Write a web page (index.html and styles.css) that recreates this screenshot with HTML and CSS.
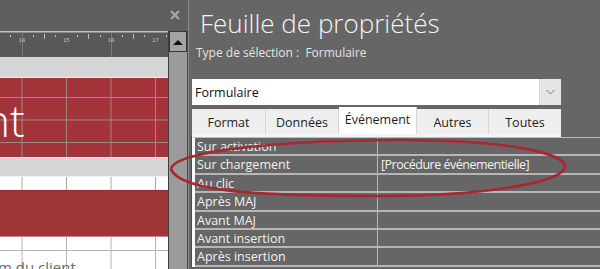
FILE: index.html
```html
<!DOCTYPE html>
<html lang="fr">
<head>
    <meta charset="UTF-8">
    <title>Feuille de propriétés</title>
    <link rel="stylesheet" href="styles.css">
</head>
<body>
    <div class="screen">
        <div class="designer">
            <div class="designer-bar">
                <svg class="close" width="12" height="12" viewBox="0 0 12 12">
                    <path d="M2 2 L10 10 M10 2 L2 10" stroke="#a9a9a9" stroke-width="2.2" fill="none"/>
                </svg>
            </div>
            <div class="designer-body">
                <div class="canvas">
                    <svg class="ruler" width="168" height="26" viewBox="0 0 168 26">
                        <rect x="0" y="0" width="168" height="1.5" fill="#c4c4c4"/>
                        <line x1="22.5" y1="2" x2="22.5" y2="26" stroke="#7a7a7a"/>
                        <line x1="111.5" y1="2" x2="111.5" y2="26" stroke="#7a7a7a"/>
                        <g stroke="#bdbdbd" stroke-width="1">
                            <line x1="10.5" y1="4" x2="10.5" y2="6"/>
                            <line x1="33.5" y1="4" x2="33.5" y2="6"/>
                            <line x1="44.5" y1="3" x2="44.5" y2="8"/>
                            <line x1="55.5" y1="4" x2="55.5" y2="6"/>
                            <line x1="77.5" y1="4" x2="77.5" y2="6"/>
                            <line x1="88.5" y1="3" x2="88.5" y2="8"/>
                            <line x1="100.5" y1="4" x2="100.5" y2="6"/>
                            <line x1="122.5" y1="4" x2="122.5" y2="6"/>
                            <line x1="133.5" y1="3" x2="133.5" y2="8"/>
                            <line x1="144.5" y1="4" x2="144.5" y2="6"/>
                            <line x1="166.5" y1="4" x2="166.5" y2="6"/>
                        </g>
                        <g class="ruler-num">
                            <text x="22" y="10.5">14</text>
                            <text x="66.5" y="10.5">15</text>
                            <text x="111" y="10.5">16</text>
                            <text x="155.5" y="10.5">17</text>
                        </g>
                    </svg>
                    <div class="band"></div>
                    <div class="section form-header">
                        <span class="form-title">nt</span>
                    </div>
                    <div class="band band-detail"></div>
                    <div class="section detail-top"></div>
                    <div class="field-box"></div>
                    <div class="section detail">
                        <span class="field-label">m du client</span>
                    </div>
                </div>
                <div class="vscroll">
                    <div class="vscroll-up">
                        <svg width="10" height="6" viewBox="0 0 10 6"><path d="M0 6 L5 1 L10 6 Z" fill="#111"/></svg>
                    </div>
                </div>
            </div>
        </div>

        <div class="sheet">
            <h1 class="sheet-title">Feuille de propriétés</h1>
            <div class="sheet-type">Type de sélection :&nbsp; Formulaire</div>
            <div class="combo">
                <span class="combo-value">Formulaire</span>
                <span class="combo-btn">
                    <svg width="9" height="6" viewBox="0 0 9 6"><path d="M0.5 1 L4.5 5 L8.5 1" stroke="#7a7a7a" stroke-width="1" fill="none"/></svg>
                </span>
            </div>
            <div class="tabs">
                <div class="tab tab-format">Format</div>
                <div class="tab tab-data">Données</div>
                <div class="tab tab-event active">Événement</div>
                <div class="tab tab-other">Autres</div>
                <div class="tab tab-all">Toutes</div>
            </div>
            <div class="tab-rule"></div>
            <div class="props">
                <div class="prop-row"><span class="prop-name">Sur activation</span><span class="prop-value"></span></div>
                <div class="prop-row"><span class="prop-name">Sur chargement</span><span class="prop-value">[Procédure événementielle]</span></div>
                <div class="prop-row"><span class="prop-name">Au clic</span><span class="prop-value"></span></div>
                <div class="prop-row"><span class="prop-name">Après MAJ</span><span class="prop-value"></span></div>
                <div class="prop-row"><span class="prop-name">Avant MAJ</span><span class="prop-value"></span></div>
                <div class="prop-row"><span class="prop-name">Avant insertion</span><span class="prop-value"></span></div>
                <div class="prop-row"><span class="prop-name">Après insertion</span><span class="prop-value"></span></div>
            </div>
        </div>

        <svg class="highlight" width="600" height="269" viewBox="0 0 600 269">
            <path d="M171 169 C175 150 290 140 400 140 C500 140 566 152 565 167 C563 183 480 196 380 196 C280 196 180 194 171 169 Z"
                  fill="none" stroke="#a9272f" stroke-width="2.6"/>
        </svg>
    </div>
</body>
</html>
```

FILE: styles.css
```css
body {
    margin: 0;
    padding: 0;
    font-family: 'Open Sans', 'Noto Sans', sans-serif;
    background: #666;
}
.screen {
    position: relative;
    width: 600px;
    height: 269px;
    overflow: hidden;
    display: flex;
}

/* form designer, left */
.designer {
    width: 188px;
    display: flex;
    flex-direction: column;
    background: #5e5e5e;
}
.designer-bar {
    height: 31px;
    display: flex;
    justify-content: flex-end;
    align-items: center;
    padding-right: 7px;
    padding-bottom: 2px;
    box-sizing: border-box;
}
.designer-body {
    flex: 1;
    display: flex;
    min-height: 0;
}
.canvas {
    width: 168px;
    overflow: hidden;
    display: flex;
    flex-direction: column;
}
.ruler {
    display: block;
    background: #585858;
    flex: none;
}
.ruler-num {
    font-family: 'DejaVu Sans', sans-serif;
    font-size: 5px;
    fill: #d0d0d0;
    text-anchor: middle;
}
.band {
    height: 20px;
    flex: none;
    background: #d6d6d6;
    border-bottom: 1px solid #efefef;
}
.band-detail {
    border-top: 1px solid #e9e9e9;
    height: 18px;
}
.section {
    flex: none;
    position: relative;
    background-image: linear-gradient(to right, #a8a8a8 1px, transparent 1px);
    background-size: 44.5px 100%;
    background-position: 21.5px 0;
}
.form-header {
    height: 79px;
    background-color: #a2343a;
    background-image:
        linear-gradient(to right, #958a8a 1px, transparent 1px),
        linear-gradient(to bottom, #958a8a 1px, transparent 1px);
    background-size: 44.5px 100%, 100% 22.5px;
    background-position: 21.5px 0, 0 19px;
    overflow: hidden;
}
.form-title {
    display: block;
    margin: 17px 0 0 -16px;
    font-family: 'Open Sans', sans-serif;
    font-weight: 300;
    font-size: 44px;
    line-height: 50px;
    color: #fff;
    white-space: nowrap;
}
.detail-top {
    height: 13px;
    background-color: #fff;
}
.field-box {
    flex: none;
    height: 47px;
    background: #a0353a;
    border-top: 1px solid #8d2a30;
    box-shadow: inset 0 -9px 0 -8px #b88a8c;
    box-sizing: border-box;
}
.detail {
    flex: 1;
    background-color: #fff;
    background-image:
        linear-gradient(to right, #b5b5b5 1px, transparent 1px),
        linear-gradient(to bottom, #b5b5b5 1px, transparent 1px);
    background-size: 44.5px 100%, 100% 44.5px;
    background-position: 21.5px 0, 0 13px;
    overflow: hidden;
}
.field-label {
    display: block;
    margin: 20px 0 0 -2px;
    font-size: 15px;
    line-height: 20px;
    color: #6a6a6a;
    white-space: nowrap;
}
.vscroll {
    width: 20px;
    background: #9b9b9b;
    border-left: 1px solid #3e3e3e;
    border-right: 1px solid #4a4a4a;
    box-sizing: border-box;
}
.vscroll-up {
    height: 19px;
    border: 1px solid #353535;
    background: #a3a3a3;
    display: flex;
    align-items: center;
    justify-content: center;
}

/* property sheet, right */
.sheet {
    flex: 1;
    border-left: 1px solid #8a8a8a;
    padding-left: 3px;
    display: flex;
    flex-direction: column;
    color: #f2f2f2;
}
.sheet-title {
    margin: 7px 0 0 8px;
    font-weight: 300;
    font-size: 26px;
    line-height: 32px;
    color: #f4f4f4;
}
.sheet-type {
    margin: 5px 0 0 4px;
    font-size: 12px;
    line-height: 18px;
    color: #e4e4e4;
}
.combo {
    margin-top: 17px;
    width: 369px;
    height: 26px;
    background: #fff;
    display: flex;
    align-items: center;
    justify-content: space-between;
}
.combo-value {
    padding-left: 3px;
    font-size: 12.5px;
    color: #111;
}
.combo-btn {
    width: 21px;
    height: 100%;
    background: #e6e6e6;
    border-left: 1px solid #d4d4d4;
    display: flex;
    align-items: center;
    justify-content: center;
}
.tabs {
    margin-top: 2px;
    width: 369px;
    height: 27px;
    display: flex;
    align-items: flex-end;
}
.tab {
    height: 25px;
    box-sizing: border-box;
    background: #efefef;
    border-right: 1px solid #d6d6d6;
    font-size: 12.5px;
    color: #1e1e1e;
    display: flex;
    align-items: center;
    justify-content: center;
    padding-top: 2px;
}
.tab-format { width: 74px; }
.tab-data { width: 73px; }
.tab-event { width: 78px; }
.tab-other { width: 72px; }
.tab-all { width: 72px; border-right: none; }
.tab.active {
    height: 27px;
    background: #fff;
    padding-top: 0;
    padding-bottom: 2px;
}
.tab-rule {
    width: 369px;
    height: 3px;
    background: #f4f4f4;
}
.props {
    border-top: 1px solid #bdbdbd;
    border-left: 3px solid #fff;
    box-shadow: -1px 0 0 #4c4c4c;
    margin-right: -3px;
}
.prop-row {
    display: flex;
    height: 18.4px;
    box-sizing: border-box;
    border-bottom: 2px solid #b6b6b6;
    font-size: 12.5px;
    line-height: 16px;
    padding-top: 1px;
}
.prop-name {
    width: 180px;
    padding-left: 2px;
    border-right: 1px solid #b6b6b6;
    margin-top: -1px;
    padding-top: 1px;
    white-space: nowrap;
}
.prop-value {
    flex: 1;
    padding-left: 3px;
    white-space: nowrap;
    letter-spacing: -0.5px;
}

.highlight {
    position: absolute;
    left: 0;
    top: 0;
    pointer-events: none;
}
```
